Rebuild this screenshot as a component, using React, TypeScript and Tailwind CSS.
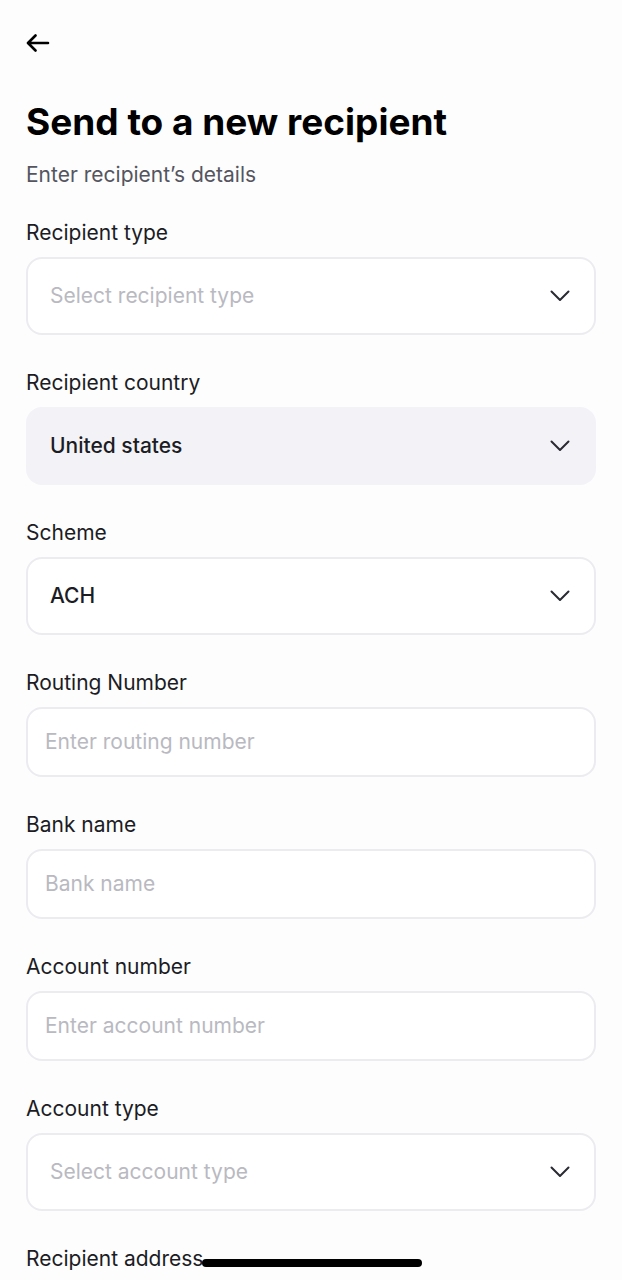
import { ReactNode } from 'react';

function Chevron() {
  return (
    <svg width="20" height="12" viewBox="0 0 20 12" fill="none" className="shrink-0">
      <path d="M1.5 1.5L10 10L18.5 1.5" stroke="#2a2a33" strokeWidth="2" strokeLinecap="round" strokeLinejoin="round" />
    </svg>
  );
}

function Field({ label, children }: { label: string; children?: ReactNode }) {
  return (
    <div className="flex flex-col">
      <label className="text-[21px] leading-[28px] text-[#1c1c24] mb-[10px]">{label}</label>
      {children}
    </div>
  );
}

function Select({ value, placeholder, filled }: { value?: string; placeholder?: string; filled?: boolean }) {
  return (
    <div
      className={
        filled
          ? 'h-[78px] rounded-[16px] bg-[#f3f3f7] flex items-center justify-between pl-[24px] pr-[26px]'
          : 'h-[78px] rounded-[16px] bg-white border-2 border-[#ececf0] flex items-center justify-between pl-[22px] pr-[24px]'
      }
    >
      {value ? (
        <span className="text-[21px] font-medium text-[#1c1c24]">{value}</span>
      ) : (
        <span className="text-[21px] text-[#b9b9c1]">{placeholder}</span>
      )}
      <Chevron />
    </div>
  );
}

function Input({ placeholder }: { placeholder: string }) {
  return (
    <div className="h-[70px] rounded-[16px] bg-white border-2 border-[#ececf0] flex items-center pl-[17px]">
      <span className="text-[21px] text-[#b9b9c1]">{placeholder}</span>
    </div>
  );
}

export default function App() {
  return (
    <div className="relative h-[1280px] overflow-hidden bg-[#fdfdfe] font-['Inter',sans-serif] px-[26px]">
      <div className="pt-[34px]">
        <svg width="24" height="18" viewBox="0 0 24 18" fill="none">
          <path d="M22 9H2.5M9.5 1.5L2 9l7.5 7.5" stroke="#000" strokeWidth="2.6" strokeLinecap="round" strokeLinejoin="round" />
        </svg>
      </div>

      <h1 className="mt-[48px] text-[37px] leading-[44px] font-bold text-black">Send to a new recipient</h1>
      <p className="mt-[17px] text-[21px] leading-[28px] text-[#55555f]">Enter recipient’s details</p>

      <div className="mt-[30px] flex flex-col gap-[34px]">
        <Field label="Recipient type">
          <Select placeholder="Select recipient type" />
        </Field>
        <Field label="Recipient country">
          <Select value="United states" filled />
        </Field>
        <Field label="Scheme">
          <Select value="ACH" />
        </Field>
        <Field label="Routing Number">
          <Input placeholder="Enter routing number" />
        </Field>
        <Field label="Bank name">
          <Input placeholder="Bank name" />
        </Field>
        <Field label="Account number">
          <Input placeholder="Enter account number" />
        </Field>
        <Field label="Account type">
          <Select placeholder="Select account type" />
        </Field>
        <Field label="Recipient address" />
      </div>

      <div className="absolute left-[202px] top-[1259px] w-[220px] h-[8px] rounded-full bg-black" />
    </div>
  );
}
